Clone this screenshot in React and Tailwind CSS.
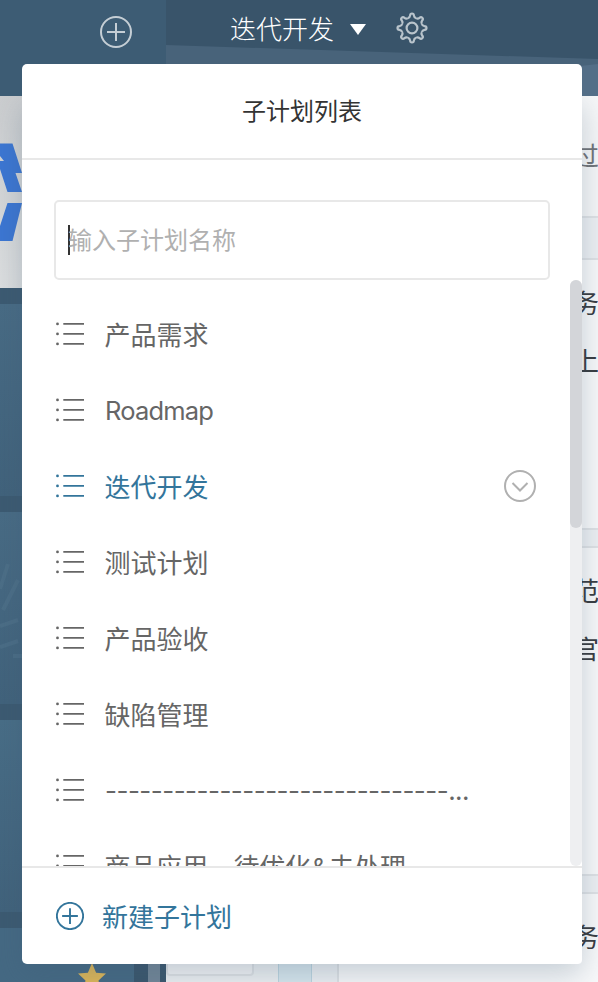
import React from "react";

const items = [
  { name: "产品需求" },
  { name: "Roadmap", latin: true },
  { name: "迭代开发", active: true },
  { name: "测试计划" },
  { name: "产品验收" },
  { name: "缺陷管理" },
  { name: "------------------------------", dashes: true },
  { name: "商品应用，待优化&去处理", tight: true },
];

function PlusCircle({ className, width }) {
  return (
    <svg viewBox="0 0 32 32" fill="none" stroke="currentColor" strokeWidth={width} className={className}>
      <circle cx="16" cy="16" r="15" />
      <path d="M16 7v18M7 16h18" />
    </svg>
  );
}

function ListIcon() {
  return (
    <svg viewBox="0 0 30 24" className="h-6 w-[30px] shrink-0" fill="currentColor">
      <circle cx="2.500" cy="1.900" r="1.400" />
      <circle cx="2.500" cy="11.900" r="1.400" />
      <circle cx="2.500" cy="21.900" r="1.400" />
      <path d="M8.300 1h20.700v1.800h-20.700zM8.300 11h20.700v1.800h-20.700zM8.300 21h20.700v1.800h-20.700z" />
    </svg>
  );
}

function Gear() {
  const teeth = [0, 45, 90, 135, 180, 225, 270, 315];
  return (
    <svg viewBox="-16 -16 32 32" className="ml-[30px] size-8 text-[#b9c4cc]" fill="none" stroke="currentColor" strokeWidth="2.200" strokeLinejoin="round">
      <circle r="5.400" />
      {teeth.map((a) => (
        <path
          key={a}
          transform={`rotate(${a})`}
          d="M-4.100 -9.900Q-2.100 -10.400 -1.900 -12.500Q-1.800 -14.500 0 -14.500Q1.800 -14.500 1.900 -12.500Q2.100 -10.400 4.100 -9.900"
        />
      ))}
    </svg>
  );
}

function Header() {
  return (
    <header className="flex h-24">
      <div className="w-[166px] bg-[#3d5c74] pl-[100px] pt-4">
        <PlusCircle className="size-8 text-[#c5ced5]" width="2" />
      </div>
      <div className="relative flex-1 bg-[#39546a]">
        <svg viewBox="0 0 432 96" className="absolute inset-0 h-24 w-[432px]">
          <path d="M0 45L432 59V96H0z" fill="#48637a" />
          <path d="M432 64L414 66V96H432z" fill="#536e87" />
        </svg>
        <div className="relative flex h-14 items-center pl-16 text-[26px] text-white">
          <span className="pb-[2px] font-light">迭代开发</span>
          <svg viewBox="0 0 16 11" className="ml-4 mt-[3px] h-[11px] w-4" fill="currentColor">
            <path d="M0 0h16L8 11z" />
          </svg>
          <Gear />
        </div>
      </div>
    </header>
  );
}

function LeftRail() {
  return (
    <aside className="flex w-[166px] shrink-0 flex-col overflow-hidden bg-[#3c5a71]">
      <div className="h-48 shrink-0 bg-gradient-to-b from-[#cbcdcf] to-[#dcdedf]">
        <svg viewBox="0 0 22 192" className="h-48 w-[22px]">
          <path d="M0 47.500h12.500L22 77H15.500L22 96H7.500L0 73zM0 60v5h4zM7.500 107H22L12.500 145H0v-15z" fill="#3c76d2" fillRule="evenodd" />
        </svg>
      </div>
      <div className="mt-4 h-48 shrink-0 bg-gradient-to-b from-[#486b84] to-[#41627b]" />
      <div className="mt-4 h-48 shrink-0 bg-gradient-to-b from-[#486b84] to-[#41627b]">
        <svg viewBox="0 0 22 192" className="h-48 w-[22px]" fill="none" stroke="#50728a" strokeWidth="4" opacity=".6">
          <path d="M8 52L0 77M18 68L3 98M0 114L18 108M0 135L18 129M13 144h9" />
        </svg>
      </div>
      <div className="mt-4 h-48 shrink-0 bg-gradient-to-b from-[#486d86] to-[#41627b]" />
      <div className="mt-4 flex h-[54px] shrink-0">
        <div className="w-[134px] bg-[#456983] pl-[78px] pt-[35px]">
          <svg viewBox="0 0 28 27" className="h-[27px] w-7" fill="#dfb757">
            <path d="M14 0l4.100 9.700L28 10.600l-7.500 7 2.300 9.900L14 22.300 5.200 27.500l2.300-9.900L0 10.600l9.900-.9z" />
          </svg>
        </div>
        <div className="w-[14px] bg-[#3a566c]" />
        <div className="w-3 bg-[#728697]" />
        <div className="w-[6px] bg-[#3a566c]" />
      </div>
    </aside>
  );
}

function Board() {
  return (
    <main className="flex flex-1 overflow-hidden bg-[#f1f3f5]">
      <div className="w-28 shrink-0 bg-[#edf0f2]">
        <div className="h-[880px] w-[88px] rounded border-2 border-[#dfe2e5] bg-[#f3f4f6]" />
      </div>
      <div className="w-[34px] shrink-0 border-x border-[#bdd5e0] bg-[#d8e7ee]" />
      <div className="flex w-[400px] shrink-0 flex-col bg-[#edf0f3] pl-[25px] text-[26px] leading-[58px] text-[#383b40]">
        <div className="h-[122px] shrink-0 border-2 border-t-0 border-[#dfe2e5] bg-[#f6f7f8] pl-[234px] pt-[30px] text-[#707377]">过</div>
        <div className="mt-10 h-[272px] shrink-0 border-2 border-[#dfe2e5] bg-[#f8f9fa] pl-[234px] pt-[13px]">
          <p>务</p>
          <p>上</p>
        </div>
        <div className="mt-4 h-[330px] shrink-0 border-2 border-[#dfe2e5] bg-[#f8f9fa] pl-[234px] pt-[13px]">
          <p>范</p>
          <p>官</p>
        </div>
        <div className="mt-4 h-[120px] shrink-0 border-2 border-[#dfe2e5] bg-[#f8f9fa] pl-[234px] pt-[13px]">务</div>
      </div>
    </main>
  );
}

function Label({ item }) {
  if (item.dashes) {
    return (
      <span className="ml-5 whitespace-nowrap font-['Inter',sans-serif] text-[26px]">
        <span className="tracking-[-0.52px]">{item.name}</span>
        <span className="tracking-[-0.6px]">...</span>
      </span>
    );
  }
  if (item.latin) {
    return <span className="ml-5 mt-[2px] whitespace-nowrap font-['Inter',sans-serif] text-[25.5px] tracking-[-0.8px]">{item.name}</span>;
  }
  return (
    <span className={"mb-px ml-[19.500px] whitespace-nowrap text-[26px] " + (item.tight ? "tracking-[-0.2px]" : "")}>
      {item.name}
    </span>
  );
}

function Item({ item }) {
  return (
    <li className={"flex h-[76px] items-center pl-[33px] " + (item.active ? "text-[#33759b]" : "text-[#666]")}>
      <ListIcon />
      <Label item={item} />
      {item.active && (
        <svg viewBox="0 0 32 32" className="ml-auto mr-[34px] size-8 text-[#b0b0b0]" fill="none" stroke="currentColor" strokeWidth="2">
          <circle cx="16" cy="16" r="15" />
          <path d="M8.500 13l7.500 7.500 7.500-7.500" />
        </svg>
      )}
    </li>
  );
}

function PlanMenu() {
  return (
    <section className="absolute left-[22px] top-16 flex h-[900px] w-[560px] flex-col overflow-hidden rounded-[5px] bg-white">
      <h2 className="flex h-24 shrink-0 items-center justify-center border-b-2 border-[#e8e8e8] pb-[2px] text-2xl text-[#333]">子计划列表</h2>
      <div className="mx-8 mt-10 flex h-20 shrink-0 items-center rounded-[5px] border-2 border-[#e8e8e8] pl-3 text-2xl text-[#b0b0b0]">
        <span className="h-[30px] w-[2px] bg-[#333]" />
        <span className="-ml-[2px] mb-[3px]">输入子计划名称</span>
      </div>
      <div className="flex min-h-0 flex-1 overflow-hidden">
        <ul className="flex-1 overflow-hidden pt-4">
          {items.map((item) => (
            <Item key={item.name} item={item} />
          ))}
        </ul>
        <div className="w-3 rounded-full bg-[#eeeff1]">
          <div className="h-[248px] rounded-full bg-[#d3d5d9]" />
        </div>
      </div>
      <footer className="flex h-[98px] shrink-0 items-center border-t-2 border-[#e8e8e8] pl-[34px] text-[26px] text-[#33759b]">
        <PlusCircle className="size-7" width="2.200" />
        <span className="mb-px ml-[18px]">新建子计划</span>
      </footer>
    </section>
  );
}

export default function App() {
  return (
    <div className="relative flex h-[982px] w-[598px] flex-col overflow-hidden font-['Noto_Sans_CJK_SC',sans-serif]">
      <Header />
      <div className="flex h-[886px]">
        <LeftRail />
        <Board />
      </div>
      <div className="absolute inset-x-0 bottom-0 top-24 overflow-hidden">
        <div className="ml-[22px] h-[868px] w-[560px] rounded shadow-[0_10px_30px_rgba(60,90,115,0.28)]" />
      </div>
      <PlanMenu />
    </div>
  );
}
